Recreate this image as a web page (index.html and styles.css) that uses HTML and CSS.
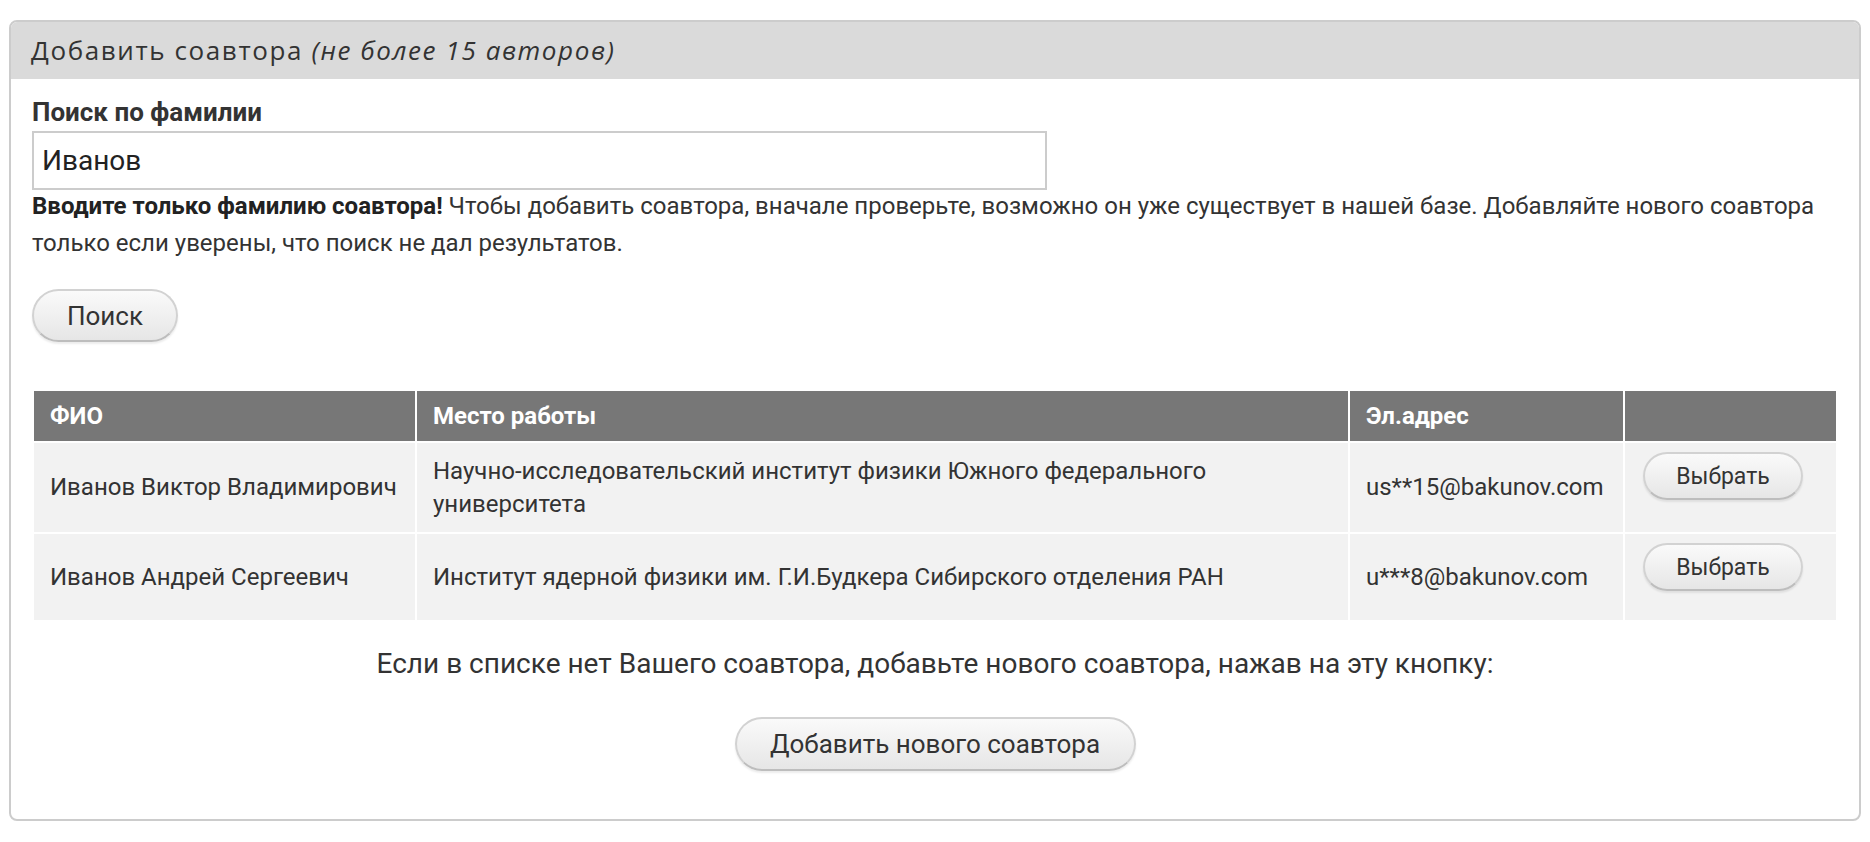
FILE: index.html
```html
<!DOCTYPE html>
<html lang="ru">
<head>
  <meta charset="UTF-8">
  <title>Добавить соавтора</title>
  <link rel="stylesheet" href="styles.css">
</head>
<body>
  <div class="panel">
    <div class="panel-head">Добавить соавтора <em>(не более 15 авторов)</em></div>
    <div class="panel-body">
      <form id="searchForm">
        <label class="field-label" for="lastName">Поиск по фамилии</label>
        <input type="text" id="lastName" name="lastName" value="Иванов">
        <p class="hint"><b>Вводите только фамилию соавтора!</b> Чтобы добавить соавтора, вначале проверьте, возможно он уже существует в нашей базе. Добавляйте нового соавтора только если уверены, что поиск не дал результатов.</p>
        <button type="submit" class="btn btn-search">Поиск</button>
      </form>

      <table class="results">
        <thead>
          <tr>
            <th class="col-name">ФИО</th>
            <th class="col-work">Место работы</th>
            <th class="col-mail">Эл.адрес</th>
            <th class="col-act"></th>
          </tr>
        </thead>
        <tbody>
          <tr>
            <td>Иванов Виктор Владимирович</td>
            <td>Научно-исследовательский институт физики Южного федерального университета</td>
            <td>us**15@bakunov.com</td>
            <td class="cell-act"><button class="btn btn-pick">Выбрать</button></td>
          </tr>
          <tr>
            <td>Иванов Андрей Сергеевич</td>
            <td>Институт ядерной физики им. Г.И.Будкера Сибирского отделения РАН</td>
            <td>u***8@bakunov.com</td>
            <td class="cell-act"><button class="btn btn-pick">Выбрать</button></td>
          </tr>
        </tbody>
      </table>

      <div class="add-new">
        <p>Если в списке нет Вашего соавтора, добавьте нового соавтора, нажав на эту кнопку:</p>
        <button class="btn btn-add">Добавить нового соавтора</button>
      </div>
    </div>
  </div>
</body>
</html>
```

FILE: styles.css
```css
body {
  margin: 0;
  padding: 20px 9px 0 9px;
  background: #fff;
  font-family: Roboto, "Liberation Sans", sans-serif;
  color: #333;
}

.panel {
  border: 2px solid #cccccc;
  border-radius: 8px;
  overflow: hidden;
}

.panel-head {
  background: #dadada;
  height: 57px;
  line-height: 57px;
  padding-left: 20px;
  font-family: "Open Sans", sans-serif;
  font-size: 26px;
  letter-spacing: 1.6px;
  color: #333;
}

.panel-head em {
  font-style: italic;
}

.panel-body {
  padding: 19px 21px 48px 21px;
}

.field-label {
  display: block;
  font-weight: bold;
  font-size: 26px;
  line-height: 28px;
  margin-bottom: 5px;
}

#lastName {
  display: block;
  box-sizing: border-box;
  width: 1015px;
  height: 59px;
  border: 2px solid #cccccc;
  padding: 0 8px;
  font-family: Roboto, sans-serif;
  font-size: 28px;
  color: #222;
  outline: none;
}

.hint {
  margin: -2px 0 0 0;
  font-size: 24px;
  line-height: 37px;
}

.hint b {
  color: #222;
}

.btn {
  font-family: Roboto, sans-serif;
  color: #333;
  background: linear-gradient(#fafafa, #e6e6e6);
  border: 2px solid #d2d2d2;
  border-bottom-color: #bdbdbd;
  border-radius: 30px;
  box-shadow: 0 2px 2px rgba(0,0,0,0.08);
  cursor: pointer;
}

.btn-search {
  display: block;
  margin-top: 27px;
  width: 146px;
  height: 53px;
  font-size: 26px;
}

.results {
  width: 100%;
  margin-top: 47px;
  border-collapse: collapse;
  table-layout: fixed;
  font-size: 24px;
}

.results th,
.results td {
  box-sizing: border-box;
  border: 2px solid #fff;
  text-align: left;
  padding: 0 16px;
}

.results th {
  background: #777777;
  color: #fff;
  font-weight: bold;
  height: 52px;
}

.results td {
  background: #f2f2f2;
  line-height: 33px;
  height: 88px;
}

.results tr:first-child td {
  height: 91px;
}

.col-name { width: 383px; }
.col-work { width: 933px; }
.col-mail { width: 275px; }

.results td.cell-act {
  vertical-align: top;
  padding: 9px 0 0 18px;
}

.btn-pick {
  display: block;
  width: 160px;
  height: 48px;
  font-size: 23px;
}

.add-new {
  text-align: center;
}

.add-new p {
  margin: 24px 0 35px 0;
  font-size: 28px;
  line-height: 36px;
}

.btn-add {
  width: 401px;
  height: 54px;
  font-size: 26px;
}
```
